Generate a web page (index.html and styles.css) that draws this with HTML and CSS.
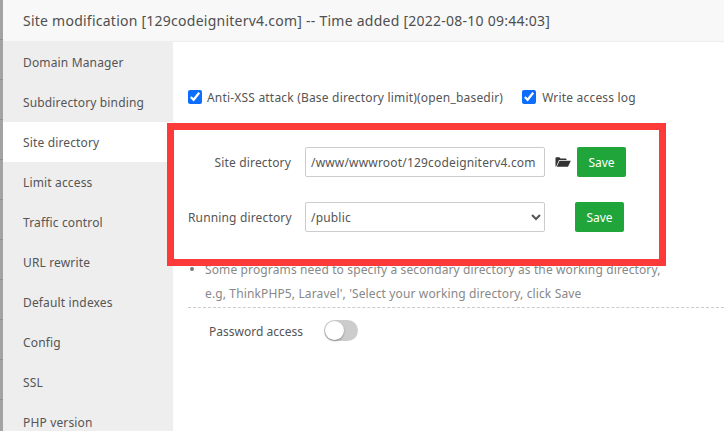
FILE: index.html
```html
<!DOCTYPE html>
<html lang="en">
<head>
<meta charset="utf-8">
<title>Site modification</title>
<link rel="stylesheet" href="styles.css">
</head>
<body>
<div class="page">
  <div class="backdrop"></div>
  <div class="modal">
    <header class="title">Site modification [129codeigniterv4.com] -- Time added [2022-08-10 09:44:03]</header>
    <div class="body">
      <nav class="side">
        <div class="item">Domain Manager</div>
        <div class="item">Subdirectory binding</div>
        <div class="item active">Site directory</div>
        <div class="item">Limit access</div>
        <div class="item">Traffic control</div>
        <div class="item">URL rewrite</div>
        <div class="item">Default indexes</div>
        <div class="item">Config</div>
        <div class="item">SSL</div>
        <div class="item">PHP version</div>
      </nav>
      <main class="content">
        <div class="checks">
          <label class="check"><input type="checkbox" checked>Anti-XSS attack (Base directory limit)(open_basedir)</label>
          <label class="check"><input type="checkbox" checked>Write access log</label>
        </div>
        <div class="row row-site">
          <span class="label">Site directory</span>
          <input class="field" type="text" value="/www/wwwroot/129codeigniterv4.com">
          <svg class="folder" viewBox="0 0 16 10" width="16" height="10" aria-hidden="true"><path fill="#333" d="M0.5 9.5V1.2C0.5 .7 .9 .3 1.4 .3H4.4L5.4 1.4H10.6C11.1 1.4 11.5 1.8 11.5 2.3V3H4L1.2 9.5Z"/><path fill="#333" d="M4.5 3.8H15.8L13 9.7H1.8Z"/></svg>
          <button class="save" type="button">Save</button>
        </div>
        <div class="row row-run">
          <span class="label">Running directory</span>
          <select class="field select"><option>/public</option></select>
          <button class="save save-run" type="button">Save</button>
        </div>
        <ul class="notes">
          <li>Some programs need to specify a secondary directory as the working directory,<br>e.g, ThinkPHP5, Laravel', 'Select your working directory, click Save</li>
        </ul>
        <div class="password">
          <span class="pw-label">Password access</span>
          <span class="toggle"><span class="knob"></span></span>
        </div>
      </main>
    </div>
    <div class="highlight"></div>
  </div>
</div>
</body>
</html>
```
FILE: styles.css
```css
* { box-sizing: border-box; }
html, body { margin: 0; height: 100%; overflow: hidden; }
body { font-family: "Noto Sans", "Noto Sans CJK SC", sans-serif; font-size: 12px; color: #555; background: #fff; }
.page { display: flex; width: 724px; height: 431px; }
.backdrop {
  width: 3px; flex: none;
  background: repeating-linear-gradient(#a3a3a3 0 39px, #8f8f8f 39px 40px);
}
.modal { flex: 1; position: relative; display: flex; flex-direction: column; overflow: hidden; background: #fff; }
.title {
  height: 42px; flex: none; padding-left: 20px;
  background: #f8f8f8; border-bottom: 1px solid #eee;
  font-size: 14px; line-height: 41px; letter-spacing: .245px; color: #4f4f4f; white-space: nowrap;
}
.body { flex: 1; display: flex; min-height: 0; }
.side { width: 170px; flex: none; background: #eee; overflow: hidden; }
.item { height: 40px; line-height: 42px; padding-left: 20px; font-size: 12px; letter-spacing: .15px; color: #555; }
.item.active { background: #fff; }
.content { flex: 1; padding: 42px 0 0 15px; min-width: 0; }
.checks { display: flex; height: 26px; align-items: center; gap: 19px; }
.check { display: flex; align-items: center; color: #555; white-space: nowrap; letter-spacing: .19px; }
.check input { width: 14px; height: 14px; margin: 0 5px 0 0; accent-color: #0d6efd; }
.check + .check input { margin-right: 6px; }
.row { display: flex; align-items: center; height: 30px; }
.row-site { margin-top: 37px; }
.row-run { margin-top: 25px; }
.label { width: 103px; text-align: right; margin-right: 14px; white-space: nowrap; letter-spacing: .15px; }
.field {
  width: 240px; height: 30px; flex: none; padding: 0 5px;
  border: 1px solid #ccc; border-radius: 2px; background: #fff;
  font: inherit; letter-spacing: .18px; color: #555;
}
.select { padding-left: 1px; }
.folder { margin-left: 10px; }
.save {
  width: 49px; height: 30px; padding: 0; margin-left: 6px;
  border: 0; border-radius: 2px; background: #20a53a; color: #fff; font: inherit;
}
.save-run { margin-left: 30px; }
.notes { margin: 26px 0 0; padding: 0 0 0 17px; color: #888; line-height: 24px; letter-spacing: .13px; list-style: none; position: relative; white-space: nowrap; }
.notes li::before { content: ""; position: absolute; left: 2px; top: 9px; width: 4px; height: 4px; border-radius: 50%; background: #777; }
.password { margin-top: 1px; border-top: 1px dashed #ccc; display: flex; align-items: center; height: 46px; padding-left: 21px; }
.pw-label { width: 115px; margin-top: 2px; }
.toggle { width: 34px; height: 21px; border-radius: 11px; background: #ccc; position: relative; display: block; }
.knob { position: absolute; left: 0; top: 0; width: 19px; height: 19px; margin: 1px; border-radius: 50%; background: #fff; box-shadow: 0 1px 2px rgba(0,0,0,.35); }
.highlight { position: absolute; left: 164px; top: 123px; width: 499px; height: 143px; border: 7px solid #fc3a3a; pointer-events: none; }
```
